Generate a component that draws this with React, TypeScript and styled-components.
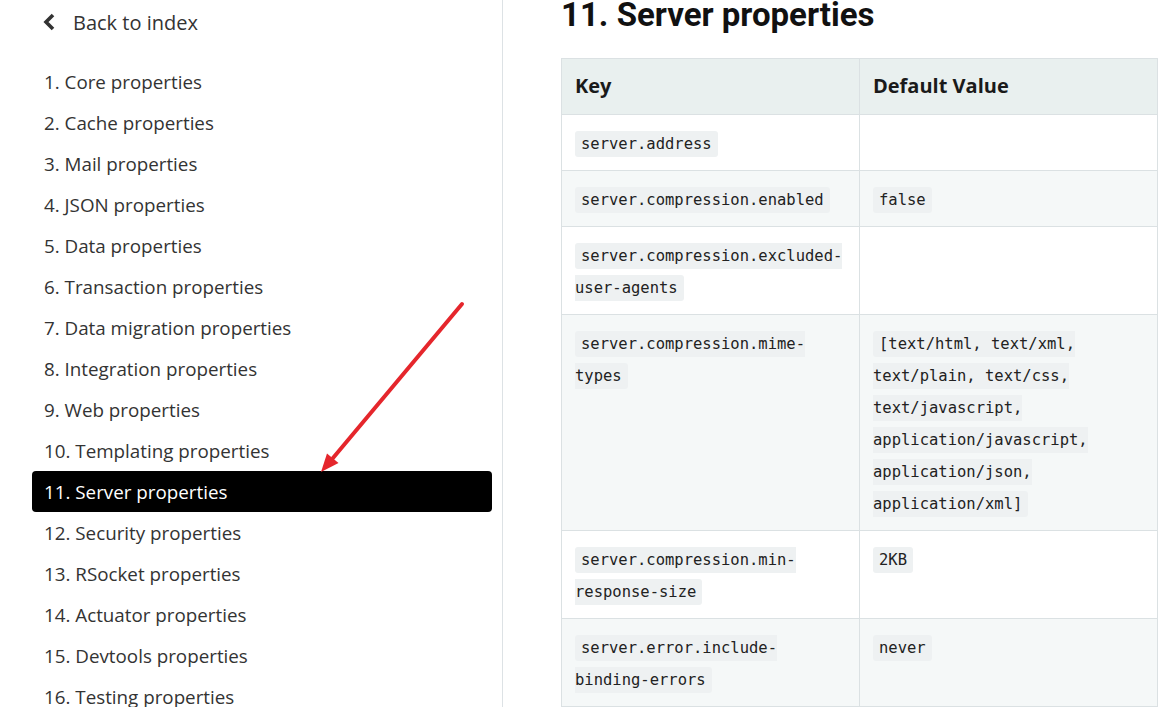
import React from "react";
import styled, { createGlobalStyle } from "styled-components";

const GlobalStyle = createGlobalStyle`
  html, body { margin: 0; padding: 0; background: #fff; }
  body { font-family: "Open Sans", "Noto Sans", sans-serif; color: #333; overflow: hidden; }
  * { box-sizing: border-box; }
`;

const Page = styled.div`
  position: relative;
  display: flex;
  width: 1158px;
  height: 707px;
  overflow: hidden;
`;

const Sidebar = styled.nav`
  width: 503px;
  flex: none;
  border-right: 1px solid #dde2e5;
  padding: 0 10px 0 32px;
`;

const BackLink = styled.a`
  display: flex;
  align-items: center;
  gap: 17px;
  height: 44px;
  padding-left: 10px;
  font-size: 20px;
  color: #333;
  text-decoration: none;
`;

const NavList = styled.ul`
  list-style: none;
  margin: 17px 0 0;
  padding: 0;
`;

const NavItem = styled.li<{ $active?: boolean }>`
  height: 41px;
  display: flex;
  align-items: center;
  padding-left: 12px;
  font-size: 18.8px;
  border-radius: 4px;
  color: ${(p) => (p.$active ? "#fff" : "#333")};
  background: ${(p) => (p.$active ? "#000" : "transparent")};
`;

const Main = styled.main`
  flex: 1;
  padding-left: 58px;
`;

const Title = styled.h1`
  margin: 0 0 28px;
  font-family: Roboto, "Liberation Sans", sans-serif;
  font-weight: 700;
  font-size: 33px;
  line-height: 30px;
  color: #111;
`;

const Table = styled.table`
  width: 100%;
  table-layout: fixed;
  border-collapse: collapse;
`;

const HeadCell = styled.th`
  width: 50%;
  text-align: left;
  background: #e9f0ef;
  border: 1px solid #dbe1e3;
  padding: 11px 13px 12px;
  line-height: 32px;
  font-size: 20px;
  font-weight: 700;
  color: #1a1a1a;
`;

const Row = styled.tr<{ $striped?: boolean }>`
  background: ${(p) => (p.$striped ? "#f5f8f8" : "#fff")};
`;

const Cell = styled.td`
  border: 1px solid #dbe1e3;
  padding: 12px 13px 11px;
  vertical-align: top;
  font-size: 16px;
  line-height: 32px;
`;

const Code = styled.code`
  font-family: "DejaVu Sans Mono", "Liberation Mono", monospace;
  font-size: 15.5px;
  line-height: 1;
  color: #222;
  background: #eef1f2;
  border-radius: 3px;
  padding: 4px 6px;
`;

const Arrow = styled.svg`
  position: absolute;
  left: 0;
  top: 0;
  pointer-events: none;
`;

const navItems = [
  "1. Core properties",
  "2. Cache properties",
  "3. Mail properties",
  "4. JSON properties",
  "5. Data properties",
  "6. Transaction properties",
  "7. Data migration properties",
  "8. Integration properties",
  "9. Web properties",
  "10. Templating properties",
  "11. Server properties",
  "12. Security properties",
  "13. RSocket properties",
  "14. Actuator properties",
  "15. Devtools properties",
  "16. Testing properties",
];

const rows: { key: string; value?: string }[] = [
  { key: "server.address" },
  { key: "server.compression.enabled", value: "false" },
  { key: "server.compression.excluded-user-agents" },
  {
    key: "server.compression.mime-types",
    value:
      "[text/html, text/xml, text/plain, text/css, text/javascript, application/javascript, application/json, application/xml]",
  },
  { key: "server.compression.min-response-size", value: "2KB" },
  { key: "server.error.include-binding-errors", value: "never" },
  { key: "server.error.include-exception", value: "false" },
];

export default function App() {
  return (
    <>
      <GlobalStyle />
      <Page>
        <Sidebar>
          <BackLink href="#">
            <svg width="14" height="18" viewBox="0 0 14 18">
              <polyline
                points="11,2 4,9 11,16"
                fill="none"
                stroke="#333"
                strokeWidth="3.6"
                strokeLinejoin="miter"
              />
            </svg>
            Back to index
          </BackLink>
          <NavList>
            {navItems.map((t) => (
              <NavItem key={t} $active={t.startsWith("11.")}>
                {t}
              </NavItem>
            ))}
          </NavList>
        </Sidebar>
        <Main>
          <Title>11. Server properties</Title>
          <Table>
            <thead>
              <tr>
                <HeadCell>Key</HeadCell>
                <HeadCell>Default Value</HeadCell>
              </tr>
            </thead>
            <tbody>
              {rows.map((r, i) => (
                <Row key={r.key} $striped={i % 2 === 1}>
                  <Cell>
                    <Code>{r.key}</Code>
                  </Cell>
                  <Cell>{r.value ? <Code>{r.value}</Code> : null}</Cell>
                </Row>
              ))}
            </tbody>
          </Table>
        </Main>
        <Arrow width="1158" height="707" viewBox="0 0 1158 707">
          <line
            x1="462"
            y1="304"
            x2="333"
            y2="458"
            stroke="#e5262c"
            strokeWidth="4"
            strokeLinecap="round"
          />
          <polygon points="321,472 338.5,463 327,453.5" fill="#e5262c" />
        </Arrow>
      </Page>
    </>
  );
}
